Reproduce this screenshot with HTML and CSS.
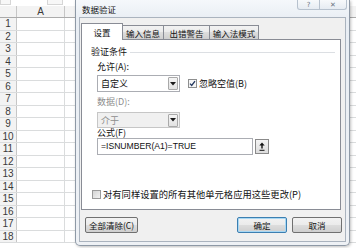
FILE: index.html
```html
<!DOCTYPE html>
<html lang="zh-CN">
<head>
    <meta charset="UTF-8">
    <title>数据验证</title>
    <link rel="stylesheet" href="styles.css">
</head>
<body>

<div class="sheet">
    <div class="strip"><span class="strip-box a"></span><span class="strip-box b"></span></div>
    <div class="row head">
        <div class="rn corner"></div>
        <div class="ca">A</div>
        <div class="cb"></div>
    </div>
    <div class="row"><div class="rn">1</div><div class="ca"></div><div class="cb"></div></div>
    <div class="row"><div class="rn">2</div><div class="ca"></div><div class="cb"></div></div>
    <div class="row"><div class="rn">3</div><div class="ca"></div><div class="cb"></div></div>
    <div class="row"><div class="rn">4</div><div class="ca"></div><div class="cb"></div></div>
    <div class="row"><div class="rn">5</div><div class="ca"></div><div class="cb"></div></div>
    <div class="row"><div class="rn">6</div><div class="ca"></div><div class="cb"></div></div>
    <div class="row"><div class="rn">7</div><div class="ca"></div><div class="cb"></div></div>
    <div class="row"><div class="rn">8</div><div class="ca"></div><div class="cb"></div></div>
    <div class="row"><div class="rn">9</div><div class="ca"></div><div class="cb"></div></div>
    <div class="row"><div class="rn">10</div><div class="ca"></div><div class="cb"></div></div>
    <div class="row"><div class="rn">11</div><div class="ca"></div><div class="cb"></div></div>
    <div class="row"><div class="rn">12</div><div class="ca"></div><div class="cb"></div></div>
    <div class="row"><div class="rn">13</div><div class="ca"></div><div class="cb"></div></div>
    <div class="row"><div class="rn">14</div><div class="ca"></div><div class="cb"></div></div>
    <div class="row"><div class="rn">15</div><div class="ca"></div><div class="cb"></div></div>
    <div class="row"><div class="rn">16</div><div class="ca"></div><div class="cb"></div></div>
    <div class="row"><div class="rn">17</div><div class="ca"></div><div class="cb"></div></div>
    <div class="row"><div class="rn">18</div><div class="ca"></div><div class="cb"></div></div>
</div>

<!-- 数据验证对话框 -->
<div class="dialog">
    <div class="titlebar">
        <span class="title">数据验证</span>
        <div class="caption-btns">
            <span class="cap help">?</span>
            <span class="cap close">✕</span>
        </div>
    </div>

    <div class="client">
        <div class="tabs">
            <div class="tab active">设置</div>
            <div class="tab t2">输入信息</div>
            <div class="tab t3">出错警告</div>
            <div class="tab t4">输入法模式</div>
        </div>

        <div class="panel">
            <div class="legend"><span>验证条件</span></div>

            <div class="fields">
                <div class="label">允许(A):</div>
                <div class="line">
                    <div class="select">
                        <span class="select-text">自定义</span>
                        <span class="drop">
                            <svg width="6" height="4" viewBox="0 0 6 4"><polygon points="0,0 6,0 3,3.5" fill="#1a1a1a"/></svg>
                        </span>
                    </div>
                    <label class="check">
                        <svg width="9" height="9" viewBox="0 0 9 9"><rect x="0.5" y="0.5" width="8" height="8" fill="#f6f6f6" stroke="#8e8f8f"/><path d="M2 4.6 L3.7 6.4 L7 2.2" fill="none" stroke="#22365e" stroke-width="1.3"/></svg>
                        <span>忽略空值(B)</span>
                    </label>
                </div>

                <div class="label dim mt">数据(D):</div>
                <div class="select disabled">
                    <span class="select-text">介于</span>
                    <span class="drop">
                        <svg width="6" height="4" viewBox="0 0 6 4"><polygon points="0,0 6,0 3,3.5" fill="#1a1a1a"/></svg>
                    </span>
                </div>

                <div class="label formula-label">公式(F)</div>
                <div class="line">
                    <div class="input">=ISNUMBER(A1)=TRUE</div>
                    <span class="ref-btn">
                        <svg width="8" height="9" viewBox="0 0 8 9"><path d="M4 2 V6.5" stroke="#111" stroke-width="1.4"/><polygon points="1.3,3.6 4,0.6 6.7,3.6" fill="#111"/><path d="M1.5 8.3 H6.5" stroke="#111" stroke-width="1"/></svg>
                    </span>
                </div>
            </div>

            <label class="check apply">
                <svg width="9" height="9" viewBox="0 0 9 9"><defs><linearGradient id="g" x1="0" y1="0" x2="1" y2="1"><stop offset="0" stop-color="#d2d2d2"/><stop offset="1" stop-color="#f4f4f4"/></linearGradient></defs><rect x="0.5" y="0.5" width="8" height="8" fill="url(#g)" stroke="#9a9a9a"/></svg>
                <span>对有同样设置的所有其他单元格应用这些更改(P)</span>
            </label>
        </div>

        <div class="footer">
            <button class="btn clear">全部清除(C)</button>
            <button class="btn ok">确定</button>
            <button class="btn cancel">取消</button>
        </div>
    </div>
</div>

</body>
</html>
```

FILE: styles.css
```css
body {
    margin: 0;
    width: 356px;
    height: 248px;
    overflow: hidden;
    position: relative;
    background-color: #fff;
    font-family: "Noto Sans CJK SC", sans-serif;
}

/* 表格背景 */
.sheet {
    display: flex;
    flex-direction: column;
    font-family: "Liberation Sans", sans-serif;
}
.strip {
    height: 6px;
    display: flex;
}
.strip-box {
    height: 4px;
    border: 1px solid #d6d6d6;
    border-top: none;
    background-color: #f7f7f7;
}
.strip-box.a {
    width: 9px;
}
.strip-box.b {
    width: 14px;
    margin-left: 36px;
}
.row {
    display: flex;
    height: 12.5px;
    box-sizing: border-box;
    border-bottom: 1px solid #dadcdd;
}
.row.head {
    height: 12px;
    border-bottom: 1px solid #ababab;
    background-color: #f3f3f3;
}
.rn {
    width: 17px;
    box-sizing: border-box;
    border-right: 1px solid #c6c6c6;
    background-color: #f3f3f3;
    text-align: center;
    font-size: 10px;
    line-height: 12px;
    color: #3a3a3a;
}
.ca {
    width: 48px;
    box-sizing: border-box;
    border-right: 1px solid #dadcdd;
}
.row.head .ca {
    border-right-color: #c6c6c6;
    text-align: center;
    font-size: 10px;
    line-height: 11px;
    color: #3a3a3a;
}
.cb {
    flex: 1;
}

/* 对话框 */
.dialog {
    position: absolute;
    left: 75px;
    top: 0;
    width: 275px;
    height: 246px;
    box-sizing: border-box;
    border: 1px solid #8e99a6;
    border-top: none;
    border-radius: 0 0 5px 5px;
    background: linear-gradient(to bottom, #f5f8fb, #e9eef4 18px, #eef1f5);
    padding: 0 3px 3px;
    display: flex;
    flex-direction: column;
    box-shadow: 1px 1px 3px rgba(0, 0, 0, 0.25);
}
.titlebar {
    height: 17px;
    display: flex;
    align-items: center;
}
.title {
    font-size: 8.5px;
    margin-left: 3px;
    color: #111;
}
.caption-btns {
    display: flex;
    margin-left: auto;
    margin-right: -1px;
    align-self: flex-start;
}
.cap {
    height: 10px;
    box-sizing: border-box;
    border: 1px solid #b7c2ce;
    border-top: none;
    background: linear-gradient(#f7f9fb, #e6ecf2);
    display: flex;
    justify-content: center;
    align-items: center;
    font-family: "DejaVu Sans", sans-serif;
    font-size: 7px;
    color: #6a7480;
}
.cap.help {
    width: 23px;
    border-radius: 0 0 0 3px;
}
.cap.close {
    width: 27px;
    border-left: none;
    border-radius: 0 0 3px 0;
}
.client {
    flex: 1;
    background-color: #f0f0f0;
    border: 1px solid #aab3be;
    padding: 5px 4px 0 1px;
    display: flex;
    flex-direction: column;
}
.tabs {
    display: flex;
    align-items: flex-end;
    height: 16px;
}
.tab {
    height: 14px;
    box-sizing: border-box;
    border: 1px solid #898c95;
    border-bottom: none;
    margin-left: -1px;
    background: linear-gradient(#f2f2f2, #ebebeb 50%, #dddddd 50%, #cfcfcf);
    display: flex;
    justify-content: center;
    align-items: center;
    font-size: 8.5px;
    color: #111;
}
.tab.active {
    width: 42px;
    height: 17px;
    margin-left: 0;
    margin-bottom: -1px;
    background: #fff;
    position: relative;
    z-index: 1;
}
.tab.t2 {
    width: 42px;
}
.tab.t3 {
    width: 47px;
}
.tab.t4 {
    width: 50px;
}
.panel {
    height: 171px;
    box-sizing: border-box;
    border: 1px solid #898c95;
    background-color: #fff;
    display: flex;
    flex-direction: column;
    font-size: 9px;
    color: #111;
}
.legend {
    display: flex;
    align-items: center;
    margin: 7px 5px 0 9px;
    line-height: 10px;
}
.legend::after {
    content: "";
    flex: 1;
    height: 1px;
    margin-left: 3px;
    background-color: #dcdfe3;
}
.fields {
    padding-left: 15px;
    display: flex;
    flex-direction: column;
    align-items: flex-start;
}
.label {
    line-height: 10px;
    margin-top: 5px;
    margin-bottom: 3px;
}
.label.dim {
    color: #8d8d8d;
}
.label.mt {
    margin-top: 5px;
    margin-bottom: 5px;
}
.label.formula-label {
    margin-top: 0;
    margin-bottom: 1px;
    line-height: 9px;
}
.line {
    display: flex;
    align-items: center;
}
.select {
    width: 83px;
    height: 17px;
    box-sizing: border-box;
    border: 1px solid #abadb3;
    background-color: #fff;
    display: flex;
    align-items: center;
    padding: 0 1px 0 3px;
}
.select.disabled {
    height: 16px;
    background-color: #f0f0f0;
    border-color: #c6c6c6;
    color: #8d8d8d;
}
.select-text {
    flex: 1;
}
.drop {
    width: 10px;
    height: 13px;
    box-sizing: border-box;
    border: 1px solid #a9a9a9;
    border-radius: 1px;
    background: linear-gradient(#f5f5f5, #e2e2e2);
    display: flex;
    justify-content: center;
    align-items: center;
}
.check {
    display: flex;
    align-items: center;
    gap: 2px;
}
.line .check {
    margin-left: 8px;
}
.input {
    width: 156px;
    height: 17px;
    box-sizing: border-box;
    border: 1px solid #abadb3;
    padding-left: 3px;
    font-family: "Liberation Sans", sans-serif;
    font-size: 8.6px;
    line-height: 15px;
    color: #111;
}
.ref-btn {
    width: 14px;
    height: 15px;
    margin-left: 2px;
    box-sizing: border-box;
    border: 1px solid #8a8a8a;
    background: linear-gradient(#f4f4f4, #dcdcdc);
    display: flex;
    justify-content: center;
    align-items: center;
}
.check.apply {
    margin-top: auto;
    margin-bottom: 8px;
    margin-left: 10px;
    font-size: 9.3px;
}
.footer {
    display: flex;
    margin-top: 7px;
    padding-left: 4px;
}
.btn {
    height: 16px;
    width: 50px;
    padding: 0;
    box-sizing: border-box;
    border: 1px solid #707070;
    border-radius: 2px;
    background: linear-gradient(#f2f2f2, #ebebeb 50%, #dddddd 50%, #cfcfcf);
    font-family: "Noto Sans CJK SC", sans-serif;
    font-size: 8.5px;
    color: #111;
}
.btn.clear {
    width: 53px;
}
.btn.ok {
    margin-left: auto;
    border-color: #3c7fb1;
    box-shadow: inset 0 0 0 1px #a8d8f4;
}
.btn.cancel {
    margin-left: 5px;
    margin-right: -1px;
}
```
